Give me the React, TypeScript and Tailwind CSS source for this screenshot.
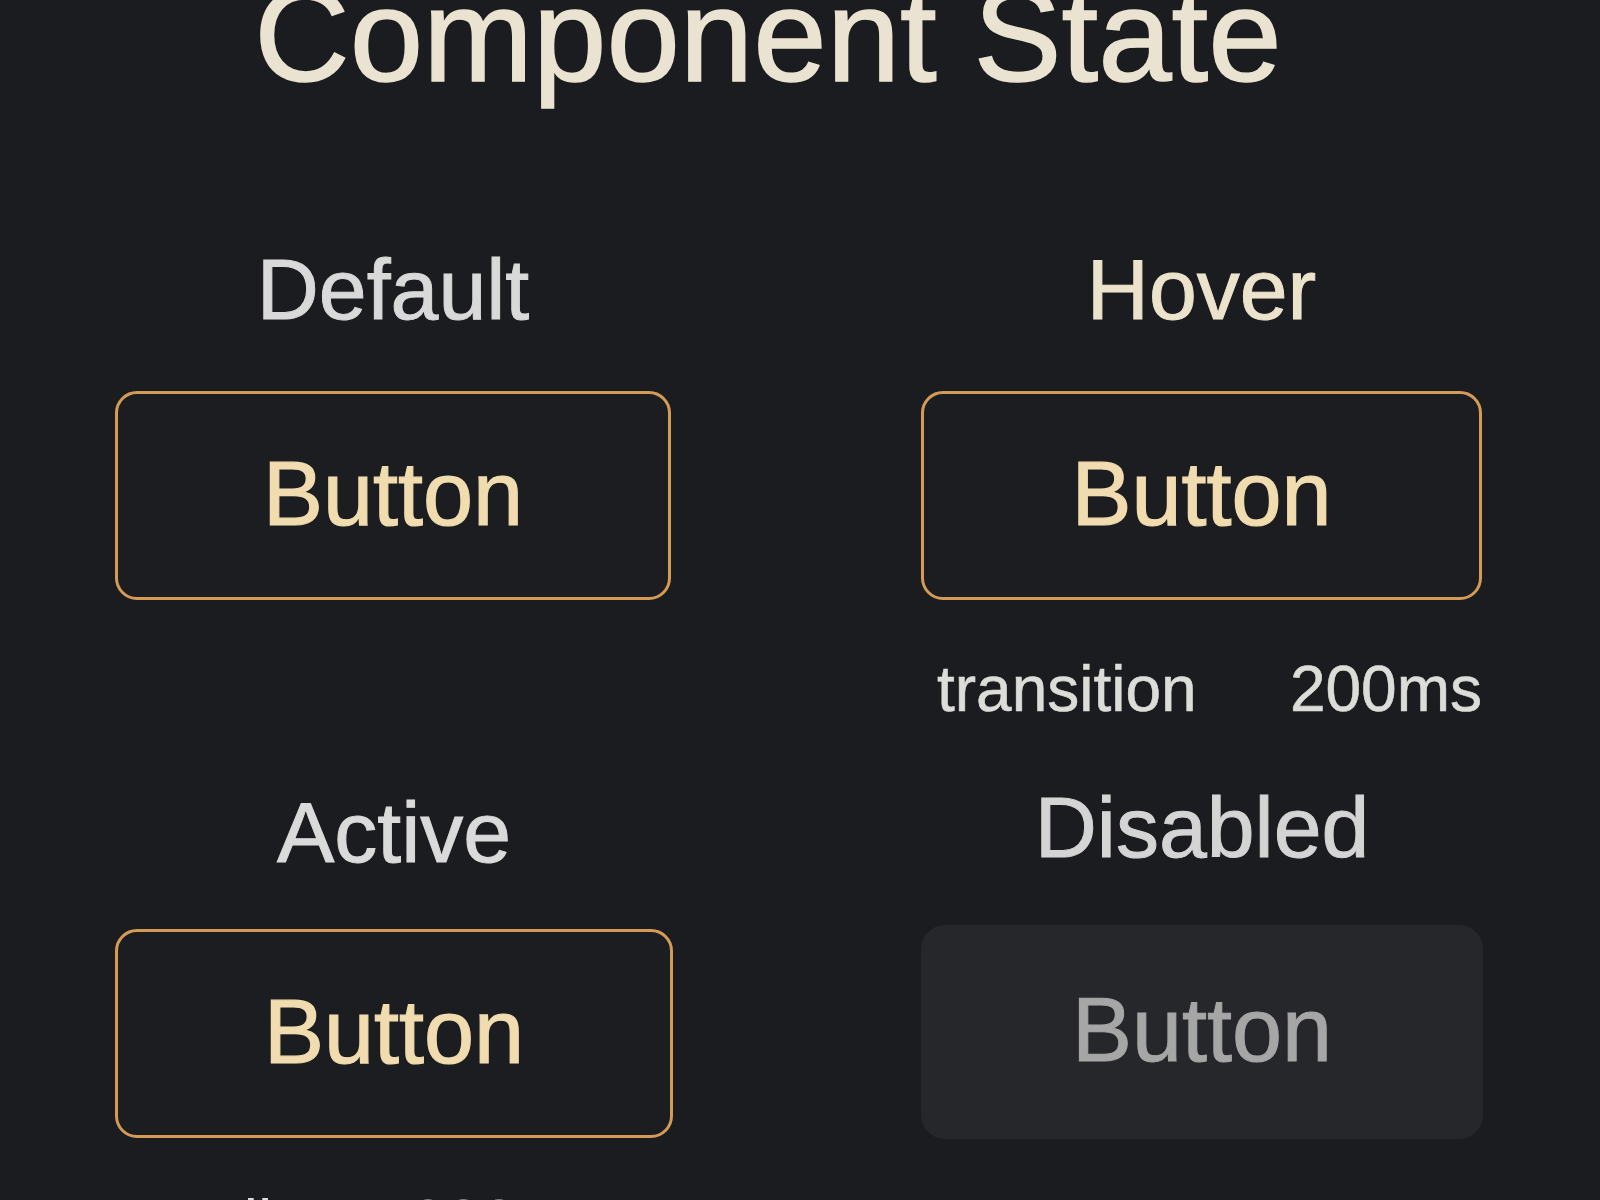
const font = "font-['Liberation_Sans','Arial',sans-serif]";

function StateButton({ disabled = false, className = '' }: { disabled?: boolean; className?: string }) {
  if (disabled) {
    return (
      <div className={`flex h-[214px] items-center justify-center rounded-[24px] bg-[#26272b] ${className}`}>
        <span className="pb-1 text-[90px] leading-none text-[#a6a6a6] [-webkit-text-stroke:1px_#a6a6a6]">Button</span>
      </div>
    );
  }
  return (
    <div className={`flex h-[209px] items-center justify-center rounded-[22px] border-[3px] border-[#d49b57] bg-[#1c1d21] ${className}`}>
      <span className="pb-1 text-[90px] leading-none text-[#f1dcaf] [-webkit-text-stroke:1.2px_#f1dcaf]">Button</span>
    </div>
  );
}

export default function App() {
  return (
    <div className={`h-[1200px] w-[1600px] overflow-hidden bg-[#1b1c1f] ${font}`}>
      {/* Title */}
      <h1 className="mt-[-30px] pr-[64px] text-center text-[132px] leading-none text-[#ebe3d1] [-webkit-text-stroke:1.5px_#ebe3d1]">
        Component State
      </h1>

      {/* Row 1: Default / Hover */}
      <div className="mt-[144px] grid grid-cols-[556px_561px] items-start gap-x-[250px] pl-[115px]">
        <div className="flex flex-col">
          <div className="text-center text-[86px] leading-none text-[#d9d9d9] [-webkit-text-stroke:1px_#d9d9d9]">Default</div>
          <StateButton className="mt-[59px]" />
        </div>
        <div className="flex flex-col">
          <div className="text-center text-[86px] leading-none text-[#ece3cc] [-webkit-text-stroke:1px_#ece3cc]">Hover</div>
          <StateButton className="mt-[59px]" />
          <div className="mt-[57px] flex justify-between pl-4 text-[64px] leading-none text-[#dcdcd8] [-webkit-text-stroke:0.6px_#dcdcd8]">
            <span>transition</span>
            <span>200ms</span>
          </div>
        </div>
      </div>

      {/* Row 2: Active / Disabled */}
      <div className="mt-[68px] grid grid-cols-[558px_562px] items-start gap-x-[248px] pl-[115px]">
        <div className="flex flex-col">
          <div className="text-center text-[86px] leading-none text-[#dadada] [-webkit-text-stroke:1px_#dadada]">Active</div>
          <StateButton className="mt-[54px]" />
          <div className="mt-[53px] flex justify-center gap-[120px] pl-[40px] text-[64px] leading-none text-[#dcdcd8]">
            <span>tilt</span>
            <span>200ms</span>
          </div>
        </div>
        <div className="mt-[-5px] flex flex-col">
          <div className="text-center text-[86px] leading-none text-[#d4d4d4] [-webkit-text-stroke:1px_#d4d4d4]">Disabled</div>
          <StateButton disabled className="mt-[55px]" />
        </div>
      </div>
    </div>
  );
}
